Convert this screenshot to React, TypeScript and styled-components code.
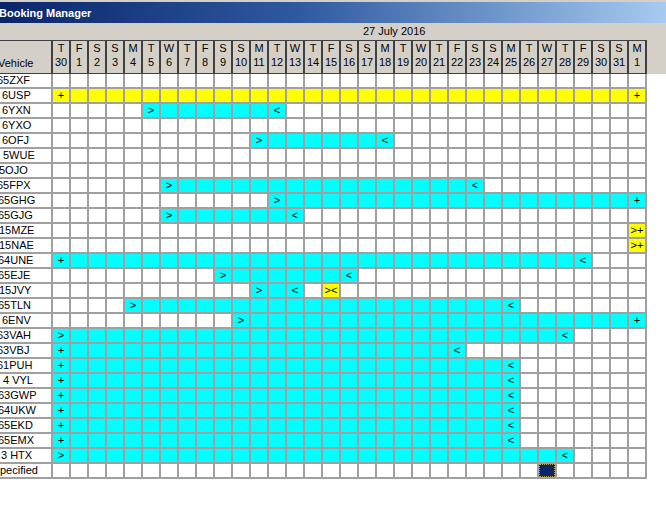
import React from "react";
import styled, { createGlobalStyle } from "styled-components";

const GlobalStyle = createGlobalStyle`
  html, body { margin: 0; padding: 0; background: #ffffff; overflow: hidden; }
  body { font-family: "Liberation Sans", Arial, sans-serif; font-size: 11px; color: #000; }
`;

const Window = styled.div`
  width: 666px;
  height: 508px;
  display: flex;
  flex-direction: column;
  background: #ffffff;
  overflow: hidden;
`;

const TitleBar = styled.div`
  height: 21px;
  border-top: 2px solid #d4d0c8;
  display: flex;
  align-items: center;
  background: linear-gradient(90deg, #0a246a 0%, #2f5aa0 45%, #a6caf0 100%);
`;

const Title = styled.span`
  margin-left: -1px;
  color: #ffffff;
  font-weight: bold;
  font-size: 11px;
  white-space: nowrap;
`;

const HeaderBand = styled.div`
  background: #d4d0c8;
  display: flex;
  flex-direction: column;
`;

const DateRow = styled.div`
  height: 17px;
  line-height: 17px;
  padding-left: 363px;
  white-space: nowrap;
`;

const COLS = "51px repeat(33, 16px)";

const HeaderGrid = styled.div`
  display: grid;
  grid-template-columns: ${COLS};
  grid-template-rows: 32px;
  column-gap: 2px;
  width: fit-content;
  padding: 1px 2px 1px 0;
  background: #404040;
`;

const HeadCell = styled.div`
  background: #d4d0c8;
  display: flex;
  flex-direction: column;
  align-items: center;
  line-height: 14px;
  white-space: nowrap;
`;

const VehicleHead = styled.div`
  background: #d4d0c8;
  display: flex;
  align-items: flex-end;
  overflow: hidden;
  line-height: 14px;
  padding-bottom: 3px;
  white-space: nowrap;
`;

const VehicleLabel = styled.span`
  margin-left: -2px;
`;

const BodyGrid = styled.div`
  display: grid;
  grid-template-columns: ${COLS};
  grid-auto-rows: 13px;
  gap: 2px;
  width: fit-content;
  padding: 0 2px 2px 0;
  background: #a0a0a0;
`;

const NameCell = styled.div`
  background: #ffffff;
  overflow: hidden;
  white-space: nowrap;
  line-height: 13px;
  display: flex;
`;

const NameText = styled.span<{ $shift: number }>`
  display: block;
  flex: none;
  margin-left: ${(p) => p.$shift}px;
`;

type Kind = "empty" | "cyan" | "yellow" | "selected";

const kindColor: Record<Kind, string> = {
  empty: "#ffffff",
  cyan: "#00ffff",
  yellow: "#ffff00",
  selected: "#0a246a",
};

const DayCell = styled.div<{ $kind: Kind }>`
  background: ${(p) => kindColor[p.$kind]};
  display: flex;
  align-items: center;
  justify-content: center;
  font-size: 11px;
  line-height: 1;
  white-space: nowrap;
  overflow: hidden;
  box-sizing: border-box;
  ${(p) => (p.$kind === "selected" ? "outline: 1px dotted #b0a060; outline-offset: -1px;" : "")}
`;

const days = [
  ["T", "30"], ["F", "1"], ["S", "2"], ["S", "3"], ["M", "4"], ["T", "5"], ["W", "6"],
  ["T", "7"], ["F", "8"], ["S", "9"], ["S", "10"], ["M", "11"], ["T", "12"], ["W", "13"],
  ["T", "14"], ["F", "15"], ["S", "16"], ["S", "17"], ["M", "18"], ["T", "19"], ["W", "20"],
  ["T", "21"], ["F", "22"], ["S", "23"], ["S", "24"], ["M", "25"], ["T", "26"], ["W", "27"],
  ["T", "28"], ["F", "29"], ["S", "30"], ["S", "31"], ["M", "1"],
];

type Bar = { a: number; b: number; c: Kind; ma?: string; mb?: string };
type Row = { name: string; shift: number; bars: Bar[] };

const rows: Row[] = [
  { name: "65ZXF", shift: -3, bars: [] },
  { name: "6USP", shift: 2, bars: [{ a: 0, b: 32, c: "yellow", ma: "+", mb: "+" }] },
  { name: "6YXN", shift: 2, bars: [{ a: 5, b: 12, c: "cyan", ma: ">", mb: "<" }] },
  { name: "6YXO", shift: 2, bars: [] },
  { name: "6OFJ", shift: 2, bars: [{ a: 11, b: 18, c: "cyan", ma: ">", mb: "<" }] },
  { name: "5WUE", shift: 3, bars: [] },
  { name: "5OJO", shift: -1, bars: [] },
  { name: "65FPX", shift: -3, bars: [{ a: 6, b: 23, c: "cyan", ma: ">", mb: "<" }] },
  { name: "65GHG", shift: -2, bars: [{ a: 12, b: 32, c: "cyan", ma: ">", mb: "+" }] },
  { name: "65GJG", shift: -2, bars: [{ a: 6, b: 13, c: "cyan", ma: ">", mb: "<" }] },
  { name: "15MZE", shift: -1, bars: [{ a: 32, b: 32, c: "yellow", ma: ">+" }] },
  { name: "15NAE", shift: -1, bars: [{ a: 32, b: 32, c: "yellow", ma: ">+" }] },
  { name: "64UNE", shift: -2, bars: [{ a: 0, b: 29, c: "cyan", ma: "+", mb: "<" }] },
  { name: "65EJE", shift: -2, bars: [{ a: 9, b: 16, c: "cyan", ma: ">", mb: "<" }] },
  {
    name: "15JVY",
    shift: -1,
    bars: [
      { a: 11, b: 13, c: "cyan", ma: ">", mb: "<" },
      { a: 15, b: 15, c: "yellow", ma: "><" },
    ],
  },
  { name: "65TLN", shift: -2, bars: [{ a: 4, b: 25, c: "cyan", ma: ">", mb: "<" }] },
  { name: "6ENV", shift: 2, bars: [{ a: 10, b: 32, c: "cyan", ma: ">", mb: "+" }] },
  { name: "63VAH", shift: -3, bars: [{ a: 0, b: 28, c: "cyan", ma: ">", mb: "<" }] },
  { name: "63VBJ", shift: -3, bars: [{ a: 0, b: 22, c: "cyan", ma: "+", mb: "<" }] },
  { name: "61PUH", shift: -3, bars: [{ a: 0, b: 25, c: "cyan", ma: "+", mb: "<" }] },
  { name: "4 VYL", shift: 3, bars: [{ a: 0, b: 25, c: "cyan", ma: "+", mb: "<" }] },
  { name: "63GWP", shift: -2, bars: [{ a: 0, b: 25, c: "cyan", ma: "+", mb: "<" }] },
  { name: "64UKW", shift: -2, bars: [{ a: 0, b: 25, c: "cyan", ma: "+", mb: "<" }] },
  { name: "65EKD", shift: -2, bars: [{ a: 0, b: 25, c: "cyan", ma: "+", mb: "<" }] },
  { name: "65EMX", shift: -2, bars: [{ a: 0, b: 25, c: "cyan", ma: "+", mb: "<" }] },
  { name: "3 HTX", shift: 1, bars: [{ a: 0, b: 28, c: "cyan", ma: ">", mb: "<" }] },
  { name: "pecified", shift: 0, bars: [{ a: 27, b: 27, c: "selected" }] },
];

function cellsFor(row: Row) {
  const cells: { kind: Kind; mark: string }[] = days.map(() => ({ kind: "empty", mark: "" }));
  row.bars.forEach((bar) => {
    for (let i = bar.a; i <= bar.b; i++) cells[i].kind = bar.c;
    if (bar.ma) cells[bar.a].mark = bar.ma;
    if (bar.mb) cells[bar.b].mark = bar.mb;
  });
  return cells;
}

export default function App() {
  return (
    <>
      <GlobalStyle />
      <Window>
        <TitleBar>
          <Title>Booking Manager</Title>
        </TitleBar>
        <HeaderBand>
          <DateRow>27 July 2016</DateRow>
          <HeaderGrid>
            <VehicleHead>
              <VehicleLabel>Vehicle</VehicleLabel>
            </VehicleHead>
            {days.map(([d, n], i) => (
              <HeadCell key={i}>
                <span>{d}</span>
                <span>{n}</span>
              </HeadCell>
            ))}
          </HeaderGrid>
        </HeaderBand>
        <BodyGrid>
          {rows.map((row, r) => (
            <React.Fragment key={r}>
              <NameCell>
                <NameText $shift={row.shift}>{row.name}</NameText>
              </NameCell>
              {cellsFor(row).map((c, i) => (
                <DayCell key={i} $kind={c.kind}>
                  {c.mark}
                </DayCell>
              ))}
            </React.Fragment>
          ))}
        </BodyGrid>
      </Window>
    </>
  );
}
